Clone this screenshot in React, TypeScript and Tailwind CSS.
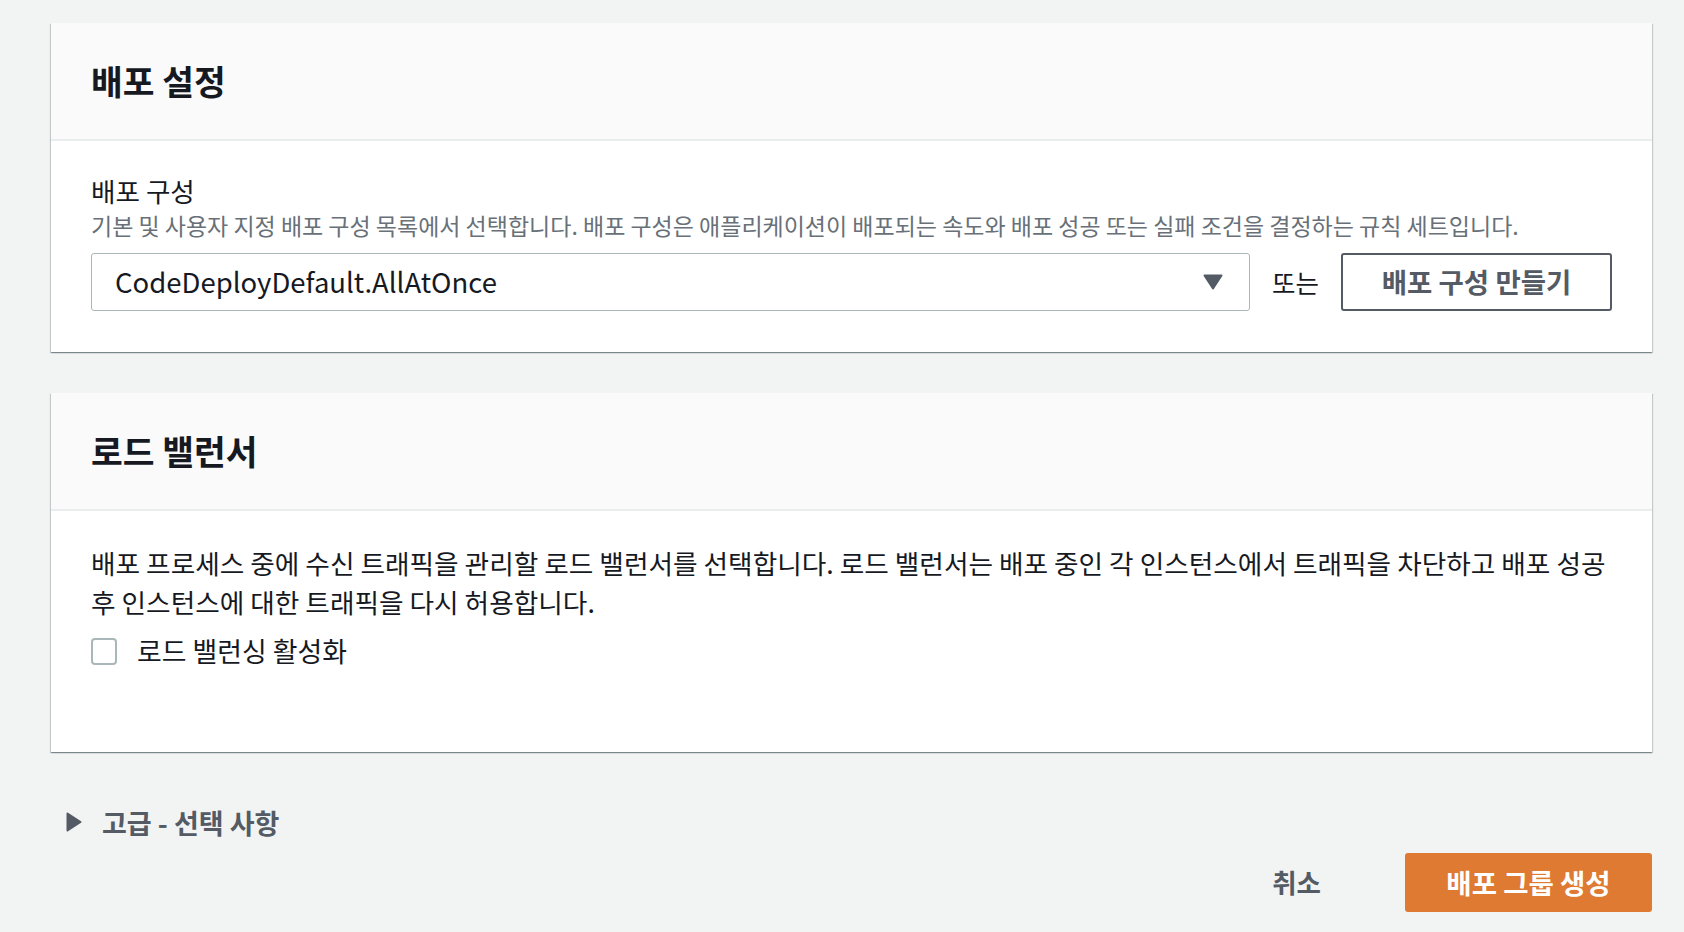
import React from "react";

const cardShadow =
  "shadow-[0_1px_1px_0_rgba(0,28,36,0.3),1px_1px_1px_0_rgba(0,28,36,0.15),-1px_1px_1px_0_rgba(0,28,36,0.15)]";

function CardHeader({ title }: { title: string }) {
  return (
    <div className="h-[118px] bg-[#fafafa] border-b-2 border-[#eaeded] flex items-center px-10">
      <h2 className="text-[34.5px] leading-none font-bold text-[#16191f] pb-[2px]">{title}</h2>
    </div>
  );
}

export default function App() {
  return (
    <div className="min-h-[932px] w-full bg-[#f2f3f3] pt-[23px] pl-[51px] pr-[32px] font-['Noto_Sans_CJK_KR','Noto_Sans',sans-serif] text-[#16191f]">
      {/* 배포 설정 */}
      <section className={`bg-white ${cardShadow}`}>
        <CardHeader title="배포 설정" />
        <div className="px-10 pt-[35px] pb-[41px]">
          <div className="text-[26.6px] leading-[30px] text-[#16191f]">배포 구성</div>
          <div className="mt-[5px] text-[23px] leading-[28px] text-[#687078]">
            기본 및 사용자 지정 배포 구성 목록에서 선택합니다. 배포 구성은 애플리케이션이 배포되는 속도와 배포 성공 또는 실패 조건을 결정하는 규칙 세트입니다.
          </div>
          <div className="mt-[14px] flex items-center gap-[22px]">
            <div className="flex-1 h-[58px] border border-[#aab7b8] rounded-[3px] flex items-center justify-between pl-[23px] pr-[26px]">
              <span className="text-[27.5px] leading-none text-[#16191f]">CodeDeployDefault.AllAtOnce</span>
              <svg width="20" height="16" viewBox="0 0 20 16">
                <path d="M1.5 1.5 H18.5 L10 14.5 Z" fill="#545b64" stroke="#545b64" strokeWidth="2" strokeLinejoin="round" />
              </svg>
            </div>
            <span className="text-[25.5px] leading-none text-[#16191f]">또는</span>
            <button className="w-[271px] h-[58px] border-2 border-[#545b64] rounded-[3px] bg-white text-[#545b64] font-bold text-[27.5px] leading-none flex items-center justify-center">
              배포 구성 만들기
            </button>
          </div>
        </div>
      </section>

      {/* 로드 밸런서 */}
      <section className={`mt-[41px] bg-white ${cardShadow}`}>
        <CardHeader title="로드 밸런서" />
        <div className="px-10 pt-[32px] pb-[85px]">
          <p className="text-[26.7px] leading-[39px] text-[#16191f]">
            배포 프로세스 중에 수신 트래픽을 관리할 로드 밸런서를 선택합니다. 로드 밸런서는 배포 중인 각 인스턴스에서 트래픽을 차단하고 배포 성공 후 인스턴스에 대한 트래픽을 다시 허용합니다.
          </p>
          <label className="mt-[14px] h-[32px] flex items-center gap-5">
            <span className="w-[26px] h-[27px] border-2 border-[#aab7b8] rounded-[4px] bg-white" />
            <span className="text-[26.9px] leading-none text-[#16191f]">로드 밸런싱 활성화</span>
          </label>
        </div>
      </section>

      {/* 고급 */}
      <div className="mt-[50px] h-10 pl-[15px] flex items-center gap-5">
        <svg width="16" height="20" viewBox="0 0 16 20">
          <path d="M1.5 1.5 L14.5 10 L1.5 18.5 Z" fill="#545b64" stroke="#545b64" strokeWidth="2" strokeLinejoin="round" />
        </svg>
        <span className="text-[27px] leading-none font-bold text-[#545b64]">고급 - 선택 사항</span>
      </div>

      {/* Footer buttons */}
      <div className="mt-[11px] flex items-center justify-end gap-[44px]">
        <button className="px-10 h-[59px] text-[26.5px] leading-none font-bold text-[#545b64]">취소</button>
        <button className="w-[247px] h-[59px] rounded-[3px] bg-[#de7a32] text-white text-[27.5px] leading-none font-bold flex items-center justify-center">
          배포 그룹 생성
        </button>
      </div>
    </div>
  );
}
